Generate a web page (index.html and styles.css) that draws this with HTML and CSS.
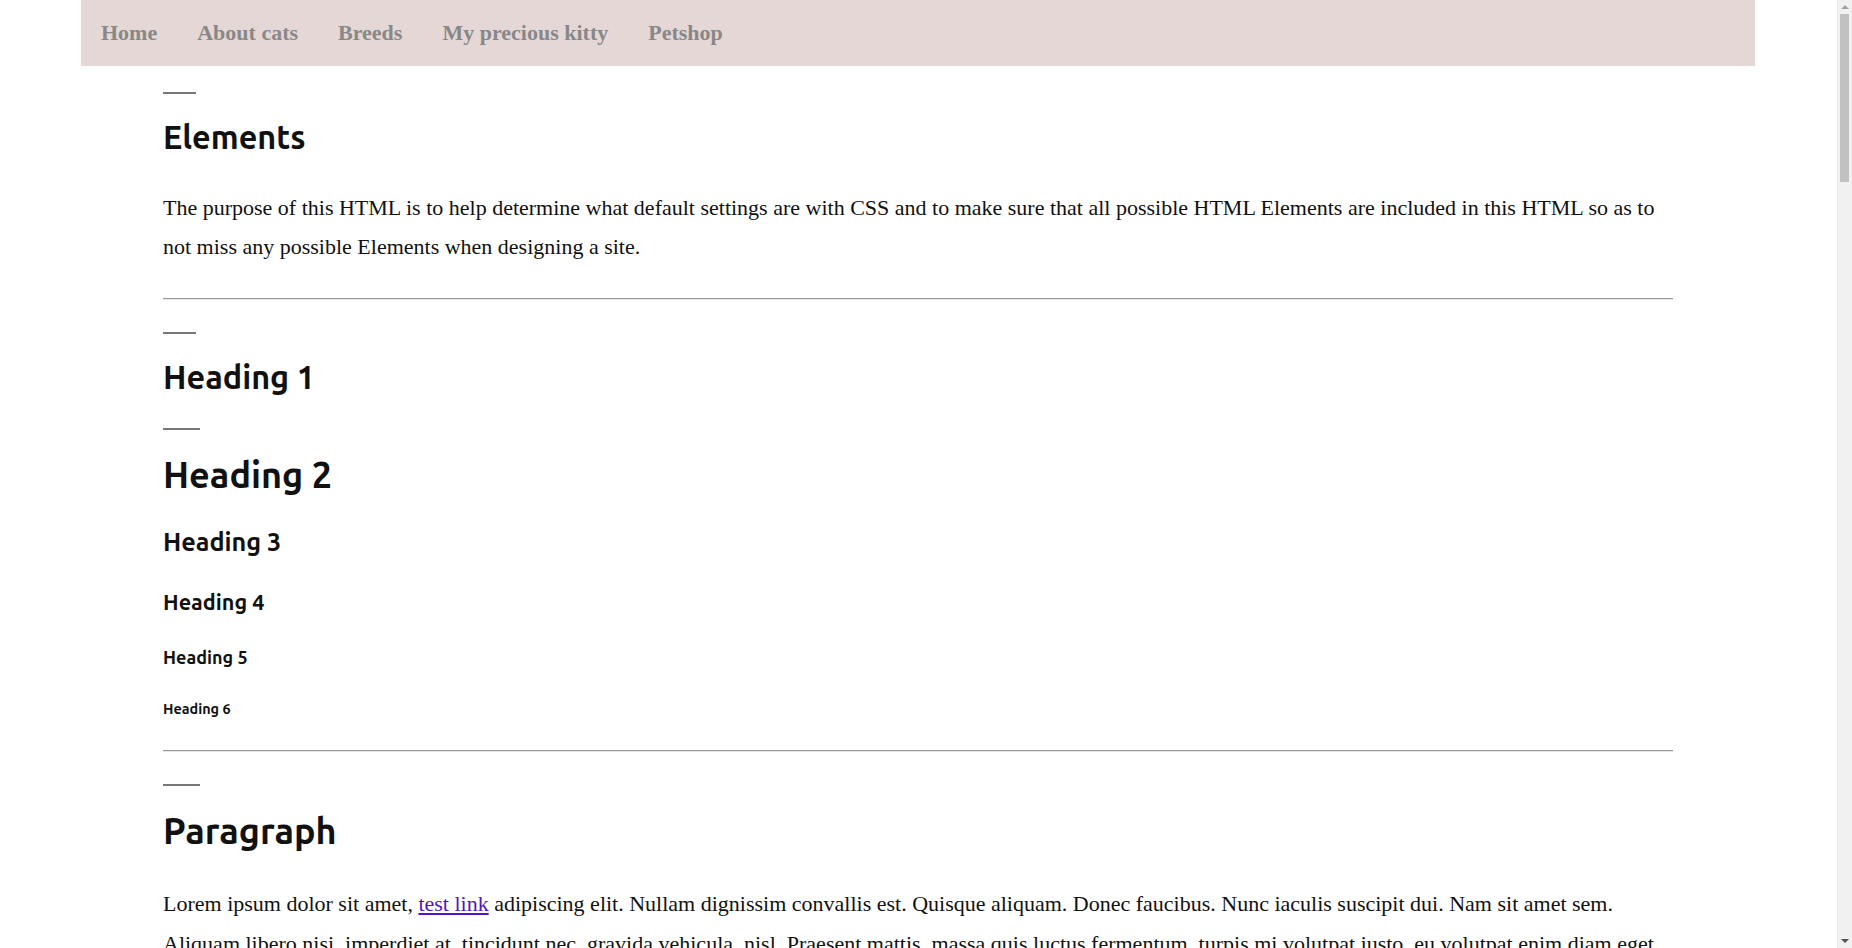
FILE: index.html
```html
<!DOCTYPE html>
<html lang="en">
<head>
<meta charset="utf-8">
<title>Elements</title>
<link rel="stylesheet" href="styles.css">
</head>
<body>
<nav class="topnav">
  <a class="navlink" href="#">Home</a>
  <a class="navlink" href="#">About cats</a>
  <a class="navlink" href="#">Breeds</a>
  <a class="navlink" href="#">My precious kitty</a>
  <a class="navlink" href="#">Petshop</a>
</nav>
<main class="content">
  <section class="block">
    <h1 class="h h1">Elements</h1>
    <p class="text">The purpose of this HTML is to help determine what default settings are with CSS and to make sure that all possible HTML Elements are included in this HTML so as to not miss any possible Elements when designing a site.</p>
  </section>
  <hr class="rule">
  <section class="block">
    <h1 class="h h1">Heading 1</h1>
    <h2 class="h h2">Heading 2</h2>
    <h3 class="h h3">Heading 3</h3>
    <h4 class="h h4">Heading 4</h4>
    <h5 class="h h5">Heading 5</h5>
    <h6 class="h h6">Heading 6</h6>
  </section>
  <hr class="rule">
  <section class="block">
    <h2 class="h h2 h2-para">Paragraph</h2>
    <p class="text">Lorem ipsum dolor sit amet, <a class="link" href="#">test link</a> adipiscing elit. Nullam dignissim convallis est. Quisque aliquam. Donec faucibus. Nunc iaculis suscipit dui. Nam sit amet sem. Aliquam libero nisi, imperdiet at, tincidunt nec, gravida vehicula, nisl. Praesent mattis, massa quis luctus fermentum, turpis mi volutpat justo, eu volutpat enim diam eget metus. Maecenas ornare tortor. Donec sed tellus eget sapien fringilla nonummy. Mauris a ante. Suspendisse quam sem, consequat at, commodo vitae, feugiat in, nunc. Morbi imperdiet augue quis tellus.</p>
    <p class="text">Lorem ipsum dolor sit amet, <em>emphasis</em> consectetuer adipiscing elit. Nullam dignissim convallis est. Quisque aliquam. Donec faucibus. Nunc iaculis suscipit dui. Nam sit amet sem. Aliquam libero nisi, imperdiet at, tincidunt nec, gravida vehicula, nisl. Praesent mattis, massa quis luctus fermentum, turpis mi volutpat justo, eu volutpat enim diam eget metus. Maecenas ornare tortor. Donec sed tellus eget sapien fringilla nonummy. Mauris a ante. Suspendisse quam sem, consequat at, commodo vitae, feugiat in, nunc. Morbi imperdiet augue quis tellus.</p>
  </section>
  <hr class="rule">
  <section class="block">
    <h2 class="h h2">List Types</h2>
    <h3 class="h h3">Definition List</h3>
    <dl class="text">
      <dt>Definition List Title</dt>
      <dd>This is a definition list division.</dd>
    </dl>
    <h3 class="h h3">Ordered List</h3>
    <ol class="text">
      <li>List Item 1</li>
      <li>List Item 2</li>
      <li>List Item 3</li>
    </ol>
    <h3 class="h h3">Unordered List</h3>
    <ul class="text">
      <li>List Item 1</li>
      <li>List Item 2</li>
      <li>List Item 3</li>
    </ul>
  </section>
  <hr class="rule">
  <section class="block">
    <h2 class="h h2">Blockquotes</h2>
    <p class="text">Let's keep it simple. Italics are good to help set it off from the body text. Be sure to style the citation.</p>
    <blockquote class="text">Good afternoon, gentlemen. I am a HAL 9000 computer. I became operational at the H.A.L. plant in Urbana, Illinois on the 12th of January 1992. My instructor was Mr. Langley, and he taught me to sing a song. If you'd like to hear it I can sing it for you.</blockquote>
  </section>
  <hr class="rule">
  <section class="block">
    <h2 class="h h2">Tables</h2>
    <p class="text">Lorem ipsum dolor sit amet, consectetuer adipiscing elit. Nullam dignissim convallis est. Quisque aliquam. Donec faucibus. Nunc iaculis suscipit dui. Nam sit amet sem. Aliquam libero nisi, imperdiet at, tincidunt nec, gravida vehicula, nisl.</p>
    <p class="text">Praesent mattis, massa quis luctus fermentum, turpis mi volutpat justo, eu volutpat enim diam eget metus. Maecenas ornare tortor. Donec sed tellus eget sapien fringilla nonummy. Mauris a ante. Suspendisse quam sem, consequat at, commodo vitae, feugiat in, nunc.</p>
  </section>
  <hr class="rule">
  <section class="block">
    <h2 class="h h2">Code</h2>
    <p class="text"><strong>Keyboard input:</strong> Cmd</p>
    <p class="text"><strong>Inline code:</strong> &lt;div&gt;code&lt;/div&gt;</p>
    <p class="text"><strong>Sample output:</strong> This is sample output from a computer program.</p>
  </section>
  <hr class="rule">
  <section class="block">
    <h2 class="h h2">Inline elements</h2>
    <p class="text">Strong is used to indicate strong importance. This text has added emphasis. The b element is stylistically different text from normal text, without any special importance. The i element is text that is offset from the normal text. The u element is text with an unarticulated, though explicitly rendered, non-textual annotation.</p>
    <p class="text">This text is deleted and This text is inserted. This text has a strikethrough. Superscript and subscript. This text is small for fine print. Abbreviation. Keyboard input. This text is a short inline quotation. This is a citation. The dfn element indicates a definition. The mark element indicates a highlight.</p>
  </section>
</main>
<div class="scrollbar" aria-hidden="true">
  <div class="sb-up"></div>
  <div class="sb-thumb"></div>
  <div class="sb-down"></div>
</div>
</body>
</html>
```

FILE: styles.css
```css
html, body {
  margin: 0;
  padding: 0;
  background: #ffffff;
}

body {
  font-family: "Liberation Serif", "Times New Roman", serif;
  color: #111111;
}

.topnav {
  width: 1674px;
  margin: 0 0 0 81px;
  height: 66px;
  background: #e4d7d5;
  display: flex;
  align-items: center;
}

.navlink {
  padding: 0 20px;
  font-family: "Liberation Serif", "Times New Roman", serif;
  font-weight: bold;
  font-size: 22px;
  color: #888888;
  text-decoration: none;
}

.content {
  width: 1510px;
  margin: 0 0 0 163px;
  padding: 26px 0 60px;
}

.block {
  display: block;
}

.h {
  font-family: "Ubuntu", "Lato", "Noto Sans", sans-serif;
  font-weight: 700;
  color: #111111;
  line-height: 1.2;
  margin: 0 0 31px;
}

.h1 { font-size: 32.4px; }
.h2 { font-size: 36px; }
.h2-para { margin-bottom: 32px; }
.h3 { font-size: 25.2px; margin-bottom: 33px; }
.h4 { font-size: 21.6px; margin-bottom: 31px; }
.h5 { font-size: 18px; margin-bottom: 32px; }
.h6 { font-size: 14.4px; margin-bottom: 32px; }

.h1::before,
.h2::before {
  content: "";
  display: block;
  height: 2px;
  background: #777777;
}

.h1::before {
  width: 33px;
  margin-bottom: 24px;
}

.h2::before {
  width: 37px;
  margin-bottom: 23px;
}

.text {
  font-size: 22px;
  line-height: 39.6px;
  margin: 0 0 31px;
}

.link {
  color: #5214c8;
  text-decoration: underline;
}

.rule {
  margin: 30px 0 32px;
  border: 0;
  border-top: 1px solid #999999;
  border-bottom: 1px solid #e6e6e6;
  height: 0;
}

.scrollbar {
  position: fixed;
  top: 0;
  right: 0;
  width: 15px;
  height: 100%;
  background: #f1f1f1;
  border-left: 1px solid #e8e8e8;
  box-sizing: border-box;
}

.sb-up,
.sb-down {
  position: absolute;
  left: 3px;
  width: 0;
  height: 0;
  border-left: 4px solid transparent;
  border-right: 4px solid transparent;
}

.sb-up {
  top: 5px;
  border-bottom: 4px solid #a3a3a3;
}

.sb-down {
  bottom: 5px;
  border-top: 4px solid #505050;
}

.sb-thumb {
  position: absolute;
  top: 14px;
  left: 2px;
  width: 9px;
  height: 168px;
  background: #c1c1c1;
}
```
